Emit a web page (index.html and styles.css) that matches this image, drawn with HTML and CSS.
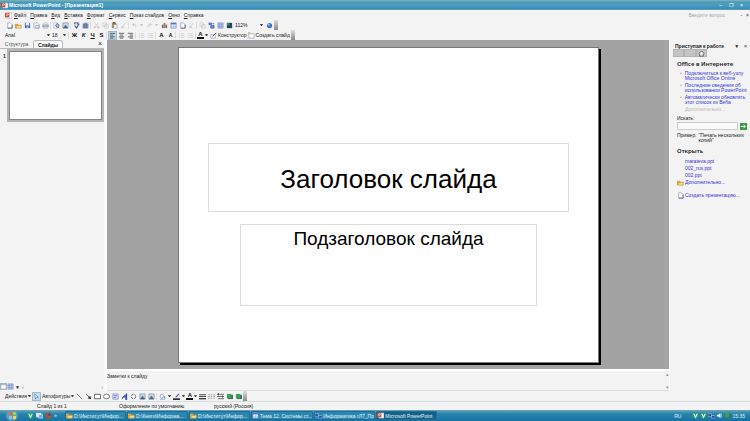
FILE: index.html
```html
<!DOCTYPE html>
<html lang="ru">
<head>
    <meta charset="UTF-8">
    <meta name="viewport" content="width=device-width, initial-scale=1.0">
    <title>Microsoft PowerPoint - [Презентация1]</title>
    <link rel="stylesheet" href="styles.css">
</head>
<body>
    <!-- Icon set -->
    <svg class="sprite" aria-hidden="true">
        <symbol id="i-new" viewBox="0 0 8 8"><path d="M2 1h3l2 2v4H2z" fill="#fff" stroke="#7c8ba8" stroke-width=".7"/><path d="M7 3v4H2" fill="none" stroke="#44546f" stroke-width=".8"/></symbol>
        <symbol id="i-open" viewBox="0 0 8 8"><path d="M0 2h3l1 1h3v4H0z" fill="#d9a640"/><path d="M1 7l1-3h6L7 7z" fill="#f7d884" stroke="#a87b22" stroke-width=".4"/></symbol>
        <symbol id="i-save" viewBox="0 0 8 8"><path d="M1 1h6v6H1z" fill="#4a62b8"/><path d="M2 1h4v3H2z" fill="#e8eefc"/><path d="M3 5h2v2H3z" fill="#b4c2ea"/></symbol>
        <symbol id="i-mail" viewBox="0 0 8 8"><path d="M1 1h4l2 2v4H1z" fill="#fff" stroke="#8291ad" stroke-width=".6"/><path d="M3 4h4v3H3z" fill="#dfe3ee" stroke="#6b7894" stroke-width=".5"/></symbol>
        <symbol id="i-print" viewBox="0 0 8 8"><path d="M2 1h4v2H2z" fill="#fff" stroke="#8c96a8" stroke-width=".5"/><path d="M0 3h8v3H0z" fill="#a9b2c2"/><path d="M2 5h4v2H2z" fill="#eef1f6" stroke="#717b8d" stroke-width=".5"/></symbol>
        <symbol id="i-find" viewBox="0 0 8 8"><path d="M1 1h4v6H1z" fill="#fff" stroke="#8a96aa" stroke-width=".6"/><circle cx="5" cy="4" r="2" fill="#9db4d6" stroke="#4f6282" stroke-width=".7"/><path d="M6 6l1 1" stroke="#4f6282"/></symbol>
        <symbol id="i-spell" viewBox="0 0 8 8"><path d="M1 1h6M2 1v2M5 1v2" stroke="#5d5d84"/><path d="M2 4l2 3 3-5" fill="none" stroke="#3f57c0" stroke-width="1.3"/></symbol>
        <symbol id="i-book" viewBox="0 0 8 8"><path d="M1 2h2v5H1zM3 1h2v6H3zM5 2h2v5H5z" fill="#8593b8" stroke="#51608a" stroke-width=".4"/></symbol>
        <symbol id="i-cut" viewBox="0 0 8 8"><path d="M2 1l3 4M6 1L3 5" stroke="#c2c2c8" stroke-width=".8"/><circle cx="2" cy="6" r="1" fill="none" stroke="#c2c2c8"/><circle cx="6" cy="6" r="1" fill="none" stroke="#c2c2c8"/></symbol>
        <symbol id="i-copy" viewBox="0 0 8 8"><path d="M1 1h4v4H1zM3 3h4v4H3z" fill="#f5f5f5" stroke="#c2c2c8" stroke-width=".7"/></symbol>
        <symbol id="i-paste" viewBox="0 0 8 8"><path d="M1 1h5v6H1z" fill="#b8863b"/><path d="M2 0h3v2H2z" fill="#666"/><path d="M3 3h4v4H3z" fill="#f4f6ff" stroke="#5c6fa8" stroke-width=".5"/></symbol>
        <symbol id="i-brush" viewBox="0 0 8 8"><path d="M6 1L4 4" stroke="#c5c5c5"/><path d="M2 4l3 1-1 2H1z" fill="#d2d2d2"/></symbol>
        <symbol id="i-undo" viewBox="0 0 8 8"><path d="M2 3h3a2 2 0 0 1 0 3M4 1L2 3l2 2" fill="none" stroke="#c4c4ca" stroke-width=".9"/></symbol>
        <symbol id="i-redo" viewBox="0 0 8 8"><path d="M6 3H3a2 2 0 0 0 0 3M4 1l2 2-2 2" fill="none" stroke="#c4c4ca" stroke-width=".9"/></symbol>
        <symbol id="i-chart" viewBox="0 0 8 8"><path d="M1 3h2v4H1z" fill="#5c6da8"/><path d="M3 1h2v6H3z" fill="#c27b42"/><path d="M5 3h2v4H5z" fill="#8d6a5c"/></symbol>
        <symbol id="i-table" viewBox="0 0 8 8"><path d="M1 1h6v6H1z" fill="#e9f1ff" stroke="#5e7cbc" stroke-width=".7"/><path d="M1 2h6" stroke="#3f62b4" stroke-width="1.3"/><path d="M1 5h6M4 3v4" stroke="#8ca3d2" stroke-width=".5"/></symbol>
        <symbol id="i-grid" viewBox="0 0 8 8"><path d="M1 1h6v6H1z" fill="#c4cfee" stroke="#6878b4" stroke-width=".6"/><path d="M1 3h6M1 5h6M3 1v6M5 1v6" stroke="#7383bd" stroke-width=".5"/></symbol>
        <symbol id="i-color" viewBox="0 0 8 8"><path d="M1 1h6v6H1z" fill="#22415c"/><path d="M1 1h3v3H1z" fill="#3c8a68"/><path d="M5 4h2v3H5z" fill="#283d94"/></symbol>
        <symbol id="i-expand" viewBox="0 0 8 8"><path d="M1 1h3v2H1zM3 4h4v3H3z" fill="#6a88d8" stroke="#3855a8" stroke-width=".6"/><path d="M5 2h2" stroke="#3855a8"/></symbol>
        <symbol id="i-help" viewBox="0 0 8 8"><circle cx="4" cy="4" r="3" fill="#3d70c8"/><circle cx="3" cy="3" r="1.3" fill="#a6cbf5"/></symbol>
        <symbol id="i-left" viewBox="0 0 8 8"><path d="M1 1.500h6M1 3.500h4M1 5.500h6M1 7h4" stroke="#333" stroke-width=".8"/></symbol>
        <symbol id="i-center" viewBox="0 0 8 8"><path d="M1 1.500h6M2 3.500h4M1 5.500h6M2 7h4" stroke="#333" stroke-width=".8"/></symbol>
        <symbol id="i-right" viewBox="0 0 8 8"><path d="M1 1.500h6M3 3.500h4M1 5.500h6M3 7h4" stroke="#333" stroke-width=".8"/></symbol>
        <symbol id="i-list" viewBox="0 0 8 8"><path d="M3 2h4M3 4h4M3 6h4M1 2h1M1 4h1M1 6h1" stroke="#c6c6ca" stroke-width=".8"/></symbol>
        <symbol id="i-design" viewBox="0 0 8 8"><path d="M1 3h5v4H1z" fill="#fff" stroke="#76859e" stroke-width=".6"/><path d="M7 1L3 5" stroke="#4a5163" stroke-width="1.1"/></symbol>
        <symbol id="i-slide" viewBox="0 0 8 8"><path d="M1 2h6v5H1z" fill="#fff" stroke="#8794ac" stroke-width=".7"/><path d="M1 0v3M0 1h3" stroke="#d8a53a" stroke-width=".7"/></symbol>
        <symbol id="i-ppt" viewBox="0 0 8 8"><path d="M2 1h6v6H2z" fill="#fff" stroke="#7f8fc0" stroke-width=".6"/><path d="M0 1h5v5H0z" fill="#c9472b"/><path d="M2 5V2h1.200a.8.8 0 0 1 0 1.600H2" fill="none" stroke="#fff" stroke-width=".7"/></symbol>
        <symbol id="i-pointer" viewBox="0 0 8 8"><path d="M2 1l4 4H4L3 7z" fill="#fff" stroke="#395f88" stroke-width=".6"/></symbol>
        <symbol id="i-line" viewBox="0 0 8 8"><path d="M1 1l6 6" stroke="#333" stroke-width=".7"/></symbol>
        <symbol id="i-arrow" viewBox="0 0 8 8"><path d="M1 1l4 4" stroke="#222" stroke-width=".8"/><path d="M7 7L3 6l3-3z" fill="#222"/></symbol>
        <symbol id="i-rect" viewBox="0 0 8 8"><path d="M.5 1.500h7v5h-7z" fill="#fff" stroke="#333" stroke-width=".8"/></symbol>
        <symbol id="i-oval" viewBox="0 0 8 8"><ellipse cx="4" cy="4" rx="3.500" ry="2.700" fill="#fff" stroke="#333" stroke-width=".7"/></symbol>
        <symbol id="i-text" viewBox="0 0 8 8"><path d="M1 1h6v6H1z" fill="#e9edff" stroke="#5969b8" stroke-width=".7"/><path d="M2 3h4M2 5h3" stroke="#3c4c9c" stroke-width=".8"/></symbol>
        <symbol id="i-art" viewBox="0 0 8 8"><path d="M7 0v8H5V5H3L1 7V5z" fill="#2f49c0"/><path d="M5 2v2H4z" fill="#bccaf7"/></symbol>
        <symbol id="i-cycle" viewBox="0 0 8 8"><circle cx="4" cy="4" r="2.600" fill="none" stroke="#5d6b84" stroke-width="1.100" stroke-dasharray="3 1"/></symbol>
        <symbol id="i-pic" viewBox="0 0 8 8"><path d="M1 1h6v6H1z" fill="#c8d7e9" stroke="#65758e" stroke-width=".6"/><path d="M1 7l3-4 3 4z" fill="#4b687f"/></symbol>
        <symbol id="i-fill" viewBox="0 0 8 8"><path d="M3 1l3 3-3 2-2-2z" fill="#fff" stroke="#4a5b7d" stroke-width=".6"/><path d="M6 4l1 2" stroke="#3465c8"/><path d="M1 7h6" stroke="#86b4d8" stroke-width="1.300"/></symbol>
        <symbol id="i-pen" viewBox="0 0 8 8"><path d="M7 1L3 5" stroke="#44588a" stroke-width="1.200"/><path d="M0 7h8" stroke="#111" stroke-width="1.700"/></symbol>
        <symbol id="i-lines" viewBox="0 0 8 8"><path d="M0 2h8M0 4h8" stroke="#333"/><path d="M0 6.500h8" stroke="#333" stroke-width="1.500"/></symbol>
        <symbol id="i-dash" viewBox="0 0 8 8"><path d="M0 2h8M0 4h8M0 6h8" stroke="#777" stroke-width=".7" stroke-dasharray="2 1"/></symbol>
        <symbol id="i-arrows" viewBox="0 0 8 8"><path d="M1 1.500h7M0 4h7M1 6.500h7" stroke="#333" stroke-width=".8"/><path d="M2 0v3L0 1.500zM6 2.500v3L8 4z" fill="#333"/></symbol>
        <symbol id="i-shadow" viewBox="0 0 8 8"><path d="M2 2h6v5H2z" fill="#4b6a5c"/><path d="M1 1h5v5H1z" fill="#35a35a"/></symbol>
        <symbol id="i-home" viewBox="0 0 8 8"><path d="M1 4l3-3 3 3M2 4v3h4V4" fill="#f4f4f4" stroke="#333" stroke-width=".8"/></symbol>
        <symbol id="i-go" viewBox="0 0 8 8"><path d="M0 0h8v8H0z" fill="#3a9a45"/><path d="M1 4h5M4 2l2 2-2 2" fill="none" stroke="#fff"/></symbol>
        <symbol id="i-globe" viewBox="0 0 8 8"><circle cx="4" cy="4" r="3.500" fill="#2b9a6a"/><path d="M2 2l2 4 2-4" fill="none" stroke="#e6fff2" stroke-width="1.200"/></symbol>
        <symbol id="i-desk" viewBox="0 0 8 8"><path d="M0 1h6v5H0z" fill="#d6ecfb"/><path d="M3 3h5v4H3z" fill="#6ba4df" stroke="#e9f6ff" stroke-width=".6"/></symbol>
        <symbol id="i-fox" viewBox="0 0 8 8"><circle cx="4" cy="4" r="3.500" fill="#b54e2c"/><circle cx="5" cy="3" r="1.700" fill="#33538f"/></symbol>
        <symbol id="i-sound" viewBox="0 0 8 8"><path d="M1 3h2l2-2v6L3 5H1z" fill="#fff"/><path d="M6 2v4" stroke="#d5efff" stroke-width=".8"/></symbol>
        <symbol id="i-net" viewBox="0 0 8 8"><path d="M0 2h4v3H0zM4 4h4v3H4z" fill="#2547a4" stroke="#bfe2f4" stroke-width=".5"/></symbol>
    </svg>

    <header class="titlebar">
        <svg class="icon"><use href="#i-ppt"/></svg>
        <h1>Microsoft PowerPoint - [Презентация1]</h1>
        <div class="window-buttons">
            <button aria-label="Свернуть">–</button>
            <button aria-label="Развернуть">❐</button>
            <button aria-label="Закрыть">×</button>
        </div>
    </header>

    <nav class="menubar">
        <svg class="icon"><use href="#i-ppt"/></svg>
        <a href="#">Файл</a>
        <a href="#">Правка</a>
        <a href="#">Вид</a>
        <a href="#">Вставка</a>
        <a href="#">Формат</a>
        <a href="#">Сервис</a>
        <a href="#">Показ слайдов</a>
        <a href="#">Окно</a>
        <a href="#">Справка</a>
        <input class="ask" type="text" placeholder="Введите вопрос" aria-label="Введите вопрос">
        <button aria-label="Свернуть окно">-</button>
        <button aria-label="Закрыть окно">×</button>
    </nav>

    <div class="toolbar">
        <button aria-label="Создать"><svg class="icon"><use href="#i-new"/></svg></button>
        <button aria-label="Открыть"><svg class="icon"><use href="#i-open"/></svg></button>
        <button aria-label="Сохранить"><svg class="icon"><use href="#i-save"/></svg></button>
        <button aria-label="Разрешения"><svg class="icon"><use href="#i-mail"/></svg></button>
        <button aria-label="Печать"><svg class="icon"><use href="#i-print"/></svg></button>
        <span class="sep"></span>
        <button aria-label="Просмотр"><svg class="icon"><use href="#i-find"/></svg></button>
        <button aria-label="Поиск"><svg class="icon"><use href="#i-pic"/></svg></button>
        <span class="sep"></span>
        <button aria-label="Орфография"><svg class="icon"><use href="#i-spell"/></svg></button>
        <button aria-label="Справочники"><svg class="icon"><use href="#i-book"/></svg></button>
        <span class="sep"></span>
        <button aria-label="Вырезать"><svg class="icon"><use href="#i-cut"/></svg></button>
        <button aria-label="Копировать"><svg class="icon"><use href="#i-copy"/></svg></button>
        <button aria-label="Вставить"><svg class="icon"><use href="#i-paste"/></svg></button>
        <button aria-label="Формат по образцу"><svg class="icon"><use href="#i-brush"/></svg></button>
        <span class="sep"></span>
        <button aria-label="Отменить"><svg class="icon"><use href="#i-undo"/></svg></button>
        <span class="caret off"></span>
        <button aria-label="Вернуть"><svg class="icon"><use href="#i-redo"/></svg></button>
        <span class="caret off"></span>
        <button aria-label="Диаграмма"><svg class="icon"><use href="#i-chart"/></svg></button>
        <button aria-label="Таблица"><svg class="icon"><use href="#i-table"/></svg></button>
        <button aria-label="Границы"><svg class="icon"><use href="#i-new"/></svg></button>
        <button aria-label="Ссылка"><svg class="icon"><use href="#i-brush"/></svg></button>
        <span class="sep"></span>
        <button aria-label="Структура"><svg class="icon"><use href="#i-copy"/></svg></button>
        <button aria-label="Развернуть все"><svg class="icon"><use href="#i-expand"/></svg></button>
        <button aria-label="Сетка"><svg class="icon"><use href="#i-grid"/></svg></button>
        <button aria-label="Цвет"><svg class="icon"><use href="#i-color"/></svg></button>
        <select class="zoom" aria-label="Масштаб"><option>112%</option></select>
        <span class="caret"></span>
        <button class="help" aria-label="Справка"><svg class="icon"><use href="#i-help"/></svg></button>
        <span class="grip"></span>
    </div>

    <div class="toolbar">
        <select class="font" aria-label="Шрифт"><option>Arial</option></select>
        <span class="caret"></span>
        <select class="size" aria-label="Размер"><option>18</option></select>
        <span class="caret"></span>
        <span class="sep"></span>
        <button class="letter">Ж</button>
        <button class="letter"><i>К</i></button>
        <button class="letter"><u>Ч</u></button>
        <button class="letter">S</button>
        <span class="sep"></span>
        <button class="pressed" aria-label="По левому краю"><svg class="icon"><use href="#i-left"/></svg></button>
        <button aria-label="По центру"><svg class="icon"><use href="#i-center"/></svg></button>
        <button aria-label="По правому краю"><svg class="icon"><use href="#i-right"/></svg></button>
        <span class="sep"></span>
        <button aria-label="Нумерация"><svg class="icon"><use href="#i-list"/></svg></button>
        <button aria-label="Маркеры"><svg class="icon"><use href="#i-list"/></svg></button>
        <span class="sep"></span>
        <button class="letter">A</button>
        <button class="letter small">A</button>
        <span class="sep"></span>
        <button aria-label="Уменьшить отступ"><svg class="icon"><use href="#i-list"/></svg></button>
        <button aria-label="Увеличить отступ"><svg class="icon"><use href="#i-list"/></svg></button>
        <span class="sep"></span>
        <button class="letter color">A</button>
        <span class="caret"></span>
        <button class="labelled"><svg class="icon"><use href="#i-design"/></svg>Конструктор</button>
        <button class="labelled"><svg class="icon"><use href="#i-slide"/></svg>Создать слайд</button>
        <span class="grip"></span>
    </div>

    <main class="workspace">
        <aside class="outline">
            <div class="tabs">
                <button class="tab">Структура</button>
                <button class="tab active">Слайды</button>
                <button class="close" aria-label="Закрыть">×</button>
            </div>
            <div class="thumbs">
                <b>1</b>
                <div class="thumb"></div>
            </div>
            <div class="views">
                <button class="pressed" aria-label="Обычный режим"><svg class="icon"><use href="#i-slide"/></svg></button>
                <button aria-label="Сортировщик"><svg class="icon"><use href="#i-grid"/></svg></button>
                <button aria-label="Показ слайдов">▼</button>
                <span class="track"><span>‹</span><span>›</span></span>
            </div>
        </aside>

        <section class="editor">
            <div class="stage">
                <div class="slide">
                    <div class="placeholder title">Заголовок слайда</div>
                    <div class="placeholder subtitle">Подзаголовок слайда</div>
                </div>
            </div>
            <div class="notes">
                <p>Заметки к слайду</p>
                <div class="scroll"><span>▴</span><span>▾</span></div>
            </div>
        </section>

        <aside class="taskpane">
            <div class="pane-head">
                <b>Приступая к работе</b>
                <button aria-label="Другие области">▼</button>
                <button aria-label="Закрыть">×</button>
            </div>
            <div class="pane-nav">
                <button aria-label="Назад"></button>
                <button aria-label="Вперед"></button>
                <button aria-label="Домой"><svg class="icon"><use href="#i-home"/></svg></button>
            </div>
            <div class="pane-body">
                <h2>Office в Интернете</h2>
                <ul>
                    <li><a href="#">Подключиться к веб-узлу<br>Microsoft Office Online</a></li>
                    <li><a href="#">Последние сведения об<br>использовании PowerPoint</a></li>
                    <li><a href="#">Автоматически обновлять<br>этот список из Веба</a></li>
                </ul>
                <a class="more" href="#">Дополнительно...</a>
                <label for="search">Искать:</label>
                <div class="search">
                    <input id="search" type="text">
                    <button aria-label="Найти"><svg class="icon"><use href="#i-go"/></svg></button>
                </div>
                <div class="sample">
                    <span>Пример:</span>
                    <span>"Печать нескольких<br>копий"</span>
                </div>
                <h2>Открыть</h2>
                <div class="files">
                    <a href="#">marateva.ppt</a>
                    <a href="#">002_rus.ppt</a>
                    <a href="#">002.ppt</a>
                    <a class="with-icon" href="#"><svg class="icon"><use href="#i-open"/></svg>Дополнительно...</a>
                    <a class="with-icon create" href="#"><svg class="icon"><use href="#i-new"/></svg>Создать презентацию...</a>
                </div>
            </div>
        </aside>
    </main>

    <div class="toolbar drawing">
        <button class="menu">Действия</button>
        <span class="caret"></span>
        <button class="pressed" aria-label="Выбор объектов"><svg class="icon"><use href="#i-pointer"/></svg></button>
        <button class="menu">Автофигуры</button>
        <span class="caret"></span>
        <button aria-label="Линия"><svg class="icon"><use href="#i-line"/></svg></button>
        <button aria-label="Стрелка"><svg class="icon"><use href="#i-arrow"/></svg></button>
        <button aria-label="Прямоугольник"><svg class="icon"><use href="#i-rect"/></svg></button>
        <button aria-label="Овал"><svg class="icon"><use href="#i-oval"/></svg></button>
        <button aria-label="Надпись"><svg class="icon"><use href="#i-text"/></svg></button>
        <button aria-label="WordArt"><svg class="icon"><use href="#i-art"/></svg></button>
        <button aria-label="Схема"><svg class="icon"><use href="#i-cycle"/></svg></button>
        <button aria-label="Картинка"><svg class="icon"><use href="#i-pic"/></svg></button>
        <button aria-label="Рисунок"><svg class="icon"><use href="#i-pic"/></svg></button>
        <span class="sep"></span>
        <button aria-label="Цвет заливки"><svg class="icon"><use href="#i-fill"/></svg></button>
        <span class="caret"></span>
        <button aria-label="Цвет линий"><svg class="icon"><use href="#i-pen"/></svg></button>
        <span class="caret"></span>
        <button class="letter color">A</button>
        <span class="caret"></span>
        <button aria-label="Тип линии"><svg class="icon"><use href="#i-lines"/></svg></button>
        <button aria-label="Тип штриха"><svg class="icon"><use href="#i-dash"/></svg></button>
        <button aria-label="Вид стрелки"><svg class="icon"><use href="#i-arrows"/></svg></button>
        <button aria-label="Тень"><svg class="icon"><use href="#i-shadow"/></svg></button>
        <button aria-label="Объем"><svg class="icon"><use href="#i-shadow"/></svg></button>
        <span class="grip"></span>
    </div>

    <footer class="status">
        <span>Слайд 1 из 1</span>
        <span>Оформление по умолчанию</span>
        <span>русский (Россия)</span>
    </footer>

    <div class="taskbar">
        <button class="start" aria-label="Пуск"><i></i><i></i><i></i><i></i></button>
        <div class="quick">
            <svg class="icon"><use href="#i-globe"/></svg>
            <svg class="icon"><use href="#i-desk"/></svg>
            <svg class="icon"><use href="#i-fox"/></svg>
            <span>»</span>
        </div>
        <div class="tasks">
            <button><svg class="icon"><use href="#i-open"/></svg><span>D:\Институт\Инфор...</span></button>
            <button><svg class="icon"><use href="#i-open"/></svg><span>D:\Книги\Информа...</span></button>
            <button><svg class="icon"><use href="#i-open"/></svg><span>D:\Институт\Инфор...</span></button>
            <button><svg class="icon"><use href="#i-table"/></svg><span>Тема 12. Системы ст...</span></button>
            <button><svg class="icon"><use href="#i-net"/></svg><span>Информатика гЛ7_Пр</span></button>
            <button class="current"><svg class="icon"><use href="#i-ppt"/></svg><span>Microsoft PowerPoint</span></button>
        </div>
        <div class="tray">
            <span class="lang">RU</span>
            <svg class="icon"><use href="#i-globe"/></svg>
            <svg class="icon"><use href="#i-globe"/></svg>
            <svg class="icon"><use href="#i-net"/></svg>
            <svg class="icon"><use href="#i-sound"/></svg>
            <svg class="icon"><use href="#i-shadow"/></svg>
            <span>15:35</span>
        </div>
    </div>
</body>
</html>
```
FILE: styles.css
```css
* {
    box-sizing: border-box;
    margin: 0;
    padding: 0;
}

body {
    display: flex;
    flex-direction: column;
    min-height: 100vh;
    background: #f3f3f3;
    color: #222;
    font-family: 'Liberation Sans', Arial, sans-serif;
    font-size: 5px;
    line-height: 6px;
}

button,
input,
select {
    border: none;
    background: none;
    color: inherit;
    font: inherit;
    appearance: none;
}

a {
    color: inherit;
    text-decoration: none;
}

.sprite {
    position: absolute;
    width: 0;
    height: 0;
}

.icon {
    display: block;
    flex: none;
    width: 7px;
    height: 7px;
}

/* Title bar */
.titlebar {
    display: flex;
    align-items: center;
    gap: 1px;
    height: 10px;
    padding: 0 7px 0 1px;
    background: linear-gradient(#83b4ba, #4a9cb8 20%, #4a9dc2 50%, #3b8cb4 90%, #78a9bd);
    color: #fff;
}

.titlebar h1 {
    flex: 1;
    font-size: 5px;
    font-weight: bold;
}

.window-buttons {
    display: flex;
    gap: 7px;
}

/* Menu */
.menubar {
    display: flex;
    align-items: center;
    gap: 4px;
    height: 10px;
    padding: 0 1px 0 5px;
}

.menubar .icon {
    margin-right: -2px;
}

.menubar a::first-letter {
    text-decoration: underline;
}

.ask {
    width: 48px;
    margin-left: auto;
}

.ask::placeholder {
    color: #aaa;
}

/* Toolbars */
.toolbar {
    display: flex;
    align-items: center;
    height: 10px;
    padding-left: 5px;
}

.toolbar button {
    display: flex;
    flex: none;
    align-items: center;
    justify-content: center;
    width: 9px;
    height: 9px;
}

.toolbar .pressed,
.views .pressed {
    background: #c5dcec;
    outline: 1px solid #9dbbd0;
    outline-offset: -1px;
}

.sep {
    flex: none;
    width: 1px;
    height: 7px;
    margin-right: 1px;
    background: #ddd;
}

.caret {
    flex: none;
    width: 3px;
    margin: 0 2px 0 1px;
    border: solid transparent;
    border-width: 2px 1px 0;
    border-top-color: #444;
}

.caret.off {
    border-top-color: #c4c4ca;
}

.grip {
    flex: none;
    width: 4px;
    height: 10px;
    background: linear-gradient(#ddd, #888);
}

.toolbar .letter {
    color: #111;
    font-size: 6px;
    font-weight: bold;
}

.toolbar .letter.small {
    font-size: 5px;
}

.toolbar .color {
    width: 7px;
    height: 8px;
    border-bottom: 2px solid #111;
}

.toolbar .labelled,
.toolbar .menu {
    gap: 1px;
    width: auto;
}

.toolbar .labelled {
    padding-right: 1px;
}

.zoom {
    width: 24px;
    margin-left: 1px;
}

.font {
    width: 41px;
}

.size {
    width: 10px;
}

/* Workspace */
.workspace {
    display: flex;
    flex: 1;
}

.outline {
    display: flex;
    flex: none;
    flex-direction: column;
    width: 107px;
    border-right: 3px solid #fafafa;
}

.tabs {
    display: flex;
    align-items: center;
    height: 9px;
    border-bottom: 1px solid #bbb;
}

.tab {
    width: 33px;
    color: #555;
}

.tab.active {
    width: 30px;
    height: 8px;
    border: 1px solid #bbb;
    border-bottom: none;
    border-radius: 3px 3px 0 0;
    background: #fff;
    color: #111;
    font-weight: bold;
}

.tabs .close {
    margin-left: auto;
    padding-right: 2px;
    font-size: 7px;
}

.thumbs {
    display: flex;
    flex: 1;
    align-items: flex-start;
    gap: 1px;
    padding-left: 3px;
}

.thumbs b {
    padding-top: 4px;
}

.thumb {
    flex: 1;
    aspect-ratio: 4 / 3;
    border: 2px solid #b4b4b4;
    outline: 1px solid #858585;
    outline-offset: -3px;
    background: #fff;
}

.views {
    display: flex;
    align-items: center;
    height: 9px;
}

.views button {
    width: 7px;
    height: 7px;
}

.track {
    display: flex;
    flex: 1;
    justify-content: space-between;
    padding: 0 1px;
    color: #888;
}

.editor {
    display: flex;
    flex: 1;
    flex-direction: column;
}

.stage {
    flex: 1;
    padding: 7px 0 5px 1px;
    background: #a3a3a3;
}

.slide {
    display: flex;
    flex-direction: column;
    align-items: center;
    gap: 12px;
    width: 75%;
    aspect-ratio: 4 / 3;
    margin: 0 auto;
    padding-top: 17%;
    border: 1px solid #777;
    background: #fff;
    box-shadow: 2px 2px 0 #000;
}

.placeholder {
    border: 1px solid #dcdcdc;
    color: #000;
    text-align: center;
}

.title {
    width: 86%;
    height: 69px;
    font-size: 26px;
    line-height: 70px;
}

.subtitle {
    width: 71%;
    height: 82px;
    font-size: 19px;
    line-height: 28px;
}

.notes {
    display: flex;
    justify-content: space-between;
    height: 22px;
    border-top: 2px solid #fff;
    border-bottom: 1px solid #ddd;
}

.notes p {
    padding-top: 2px;
}

.scroll {
    display: flex;
    flex-direction: column;
    justify-content: space-between;
    color: #999;
}

/* Task pane */
.taskpane {
    flex: none;
    width: 81px;
    padding: 2px 3px 0 3px;
    border-left: 1px solid #fff;
}

.pane-head {
    display: flex;
    align-items: center;
    gap: 5px;
    height: 7px;
    padding-left: 2px;
}

.pane-head b {
    flex: 1;
    white-space: nowrap;
}

.pane-nav {
    display: flex;
    width: 34px;
    height: 8px;
    background: #c4c4c4;
}

.pane-nav button {
    display: flex;
    flex: 1;
    align-items: center;
    justify-content: center;
    border: 1px solid #b4b4b4;
}

.pane-body {
    padding: 2px 0 0 4px;
}

h2 {
    font-family: 'Noto Sans', sans-serif;
    font-size: 6px;
    font-weight: 600;
    line-height: 10px;
    white-space: nowrap;
}

.taskpane a {
    color: #3434d8;
    white-space: nowrap;
}

.taskpane li {
    display: flex;
    gap: 3px;
    margin-left: 3px;
    padding-top: 2px;
    line-height: 5px;
}

.taskpane li::before {
    content: '•';
    color: #e0a050;
}

.taskpane .more {
    display: block;
    padding: 1px 0 3px 8px;
    color: #bbb;
}

.search {
    display: flex;
    gap: 2px;
    margin: 1px 0 3px;
}

.search input {
    flex: 1;
    min-width: 0;
    height: 8px;
    border: 1px solid #ccc;
    background: #fafafa;
}

.sample {
    display: flex;
    gap: 2px;
    padding-bottom: 3px;
    line-height: 5px;
    white-space: nowrap;
}

.files {
    display: flex;
    flex-direction: column;
    padding: 2px 0 0 8px;
    line-height: 7px;
}

.with-icon {
    display: flex;
    gap: 1px;
    margin-left: -8px;
}

.create {
    margin-top: 6px;
}

/* Bottom bars */
.drawing .pressed {
    margin-right: 1px;
}

.drawing .caret {
    margin-right: 1px;
}

.status {
    display: flex;
    height: 9px;
    padding-left: 37px;
    border-top: 1px solid #d5dede;
    line-height: 8px;
}

.status span:first-child {
    width: 82px;
}

.status span:nth-child(2) {
    width: 95px;
}

.taskbar {
    display: flex;
    align-items: center;
    height: 11px;
    padding: 0 5px 0 6px;
    background: linear-gradient(#6fa5b8, #2584ae 35%, #1673a2);
    color: #e4f3fa;
}

.start {
    display: grid;
    grid-template-columns: 3px 3px;
    gap: 1px;
    place-content: center;
    width: 12px;
    height: 11px;
    border-radius: 50%;
    background: #5f9cba;
}

.start i {
    height: 3px;
    background: #e5693c;
}

.start i:nth-child(2) {
    background: #9fce54;
}

.start i:nth-child(3) {
    background: #7fc4f0;
}

.start i:nth-child(4) {
    background: #f5d65a;
}

.quick {
    display: flex;
    gap: 2px;
    width: 47px;
    padding-left: 9px;
}

.tasks {
    display: flex;
    flex: 1;
    gap: 1px;
}

.tasks button {
    display: flex;
    align-items: center;
    gap: 1px;
    min-width: 61px;
    height: 9px;
    border: 1px solid #1c6e99;
    border-radius: 1px;
    background: #2b87b0;
    white-space: nowrap;
}

.tasks .current {
    background: #146288;
}

.tray {
    display: flex;
    align-items: center;
    gap: 1px;
}

.lang {
    margin-right: 10px;
}
```
